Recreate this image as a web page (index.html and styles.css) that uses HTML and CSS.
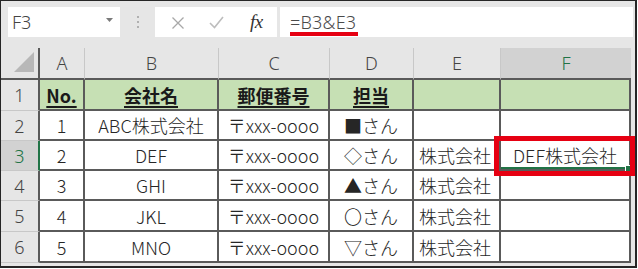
FILE: index.html
```html
<!DOCTYPE html>
<html lang="ja">
<head>
<meta charset="utf-8">
<title>Excel</title>
<link rel="stylesheet" href="styles.css">
</head>
<body>
<div class="frame">
  <div class="fbar">
    <div class="namebox">
      <span class="name">F3</span>
      <svg class="drop" width="7" height="4" viewBox="0 0 7 4"><path d="M0 0H7L3.5 4Z" fill="#7a7a7a"/></svg>
    </div>
    <div class="dots"><i></i><i></i><i></i></div>
    <div class="fxbox">
      <svg class="ico" width="14" height="14" viewBox="0 0 14 14"><path d="M1.5 1.5L12.5 12.5M12.5 1.5L1.5 12.5" stroke="#a8a8a8" stroke-width="1.3" fill="none"/></svg>
      <svg class="ico chk" width="15" height="13" viewBox="0 0 15 13"><path d="M1 7L5.5 11.5L14 1" stroke="#bdbdbd" stroke-width="1.6" fill="none"/></svg>
      <span class="fx">fx</span>
    </div>
    <div class="finput"><span class="formula">=B3&amp;E3</span></div>
  </div>
  <div class="sheet">
    <div class="ch corner"><span class="tri"></span></div>
    <div class="ch">A</div>
    <div class="ch">B</div>
    <div class="ch">C</div>
    <div class="ch">D</div>
    <div class="ch">E</div>
    <div class="ch sel">F</div>

    <div class="rh">1</div>
    <div class="c hd">No.</div>
    <div class="c hd">会社名</div>
    <div class="c hd">郵便番号</div>
    <div class="c hd">担当</div>
    <div class="c hd"></div>
    <div class="c hd"></div>

    <div class="rh">2</div>
    <div class="c">1</div>
    <div class="c">ABC株式会社</div>
    <div class="c">〒xxx-oooo</div>
    <div class="c">■さん</div>
    <div class="c l"></div>
    <div class="c"></div>

    <div class="rh sel">3</div>
    <div class="c">2</div>
    <div class="c">DEF</div>
    <div class="c">〒xxx-oooo</div>
    <div class="c">◇さん</div>
    <div class="c l">株式会社</div>
    <div class="c active">DEF株式会社<span class="handle"></span><span class="redbox"></span></div>

    <div class="rh">4</div>
    <div class="c">3</div>
    <div class="c">GHI</div>
    <div class="c">〒xxx-oooo</div>
    <div class="c">▲さん</div>
    <div class="c l">株式会社</div>
    <div class="c"></div>

    <div class="rh">5</div>
    <div class="c">4</div>
    <div class="c">JKL</div>
    <div class="c">〒xxx-oooo</div>
    <div class="c">〇さん</div>
    <div class="c l">株式会社</div>
    <div class="c"></div>

    <div class="rh">6</div>
    <div class="c">5</div>
    <div class="c">MNO</div>
    <div class="c">〒xxx-oooo</div>
    <div class="c">▽さん</div>
    <div class="c l">株式会社</div>
    <div class="c"></div>
  </div>
</div>
</body>
</html>
```
FILE: styles.css
```css
html, body {
  margin: 0;
  padding: 0;
  background: #ffffff;
}
.frame {
  position: relative;
  box-sizing: border-box;
  width: 637px;
  height: 268px;
  border: 1px solid #262626;
  border-right-width: 2px;
  border-bottom-width: 2px;
  background: #e6e6e6;
  overflow: visible;
}
.fbar {
  display: flex;
  align-items: flex-start;
  height: 47px;
  box-sizing: border-box;
  padding: 6px 0 0 7px;
}
.namebox {
  box-sizing: border-box;
  width: 112px;
  height: 30px;
  background: #fff;
  display: flex;
  align-items: center;
  justify-content: space-between;
  padding: 0 7px 0 4px;
}
.name {
  font-family: "Noto Sans", "Open Sans", sans-serif;
  font-size: 18px;
  font-weight: 300;
  color: #444;
}
.drop { margin-top: -5px; }
.dots {
  width: 35px;
  height: 30px;
  display: flex;
  flex-direction: column;
  align-items: center;
  justify-content: center;
  gap: 3px;
}
.dots i {
  display: block;
  width: 2px;
  height: 2px;
  background: #b0b0b0;
}
.fxbox {
  box-sizing: border-box;
  width: 122px;
  height: 30px;
  background: #fff;
  display: flex;
  align-items: center;
  padding-left: 16px;
}
.ico { margin-top: 1px; }
.chk { margin-left: 24px; }
.fx {
  margin-left: 26px;
  font-family: "Liberation Serif", serif;
  font-style: italic;
  font-size: 19px;
  color: #333;
  letter-spacing: -0.5px;
}
.finput {
  box-sizing: border-box;
  width: 353px;
  height: 30px;
  margin-left: 3px;
  background: #fff;
  padding-left: 10px;
  display: flex;
  align-items: center;
}
.formula {
  font-family: "Noto Sans", "Open Sans", sans-serif;
  font-size: 18px;
  font-weight: 300;
  color: #4a4a4a;
  position: relative;
  letter-spacing: 0.2px;
}
.formula::after {
  content: "";
  position: absolute;
  left: 0;
  right: -2px;
  bottom: -2px;
  height: 4px;
  background: #e60012;
}
.sheet {
  display: grid;
  grid-template-columns: 39px 45px 134px 111px 84px 87px 130px;
  grid-template-rows: 32px 31px 30px 30px 30px 31px 31px;
}
.ch {
  box-sizing: border-box;
  display: flex;
  align-items: center;
  justify-content: center;
  font-family: "Noto Sans", "Open Sans", sans-serif;
  font-size: 18px;
  font-weight: 300;
  color: #444;
  border-right: 1px solid #c8c8c8;
  border-bottom: 2px solid #5a5a5a;
}
.ch.corner {
  position: relative;
  border-right: 2px solid #5a5a5a;
}
.tri {
  position: absolute;
  right: 4px;
  bottom: 6px;
  width: 0;
  height: 0;
  border-left: 20px solid transparent;
  border-bottom: 20px solid #b8b8b8;
}
.ch.sel {
  background: #d2d2d2;
  color: #217346;
  border-right: none;
}
.rh {
  box-sizing: border-box;
  display: flex;
  align-items: center;
  justify-content: center;
  font-family: "Noto Sans", "Open Sans", sans-serif;
  font-size: 18px;
  font-weight: 300;
  color: #444;
  border-right: 2px solid #5a5a5a;
  border-bottom: 1px solid #c8c8c8;
}
.rh.sel {
  background: #d2d2d2;
  color: #217346;
  border-right-color: #217346;
}
.c {
  box-sizing: border-box;
  display: flex;
  align-items: center;
  justify-content: center;
  background: #fff;
  font-family: "Noto Sans CJK JP", "Noto Sans", sans-serif;
  font-size: 18px;
  font-weight: 300;
  color: #262626;
  border-right: 2px solid #5a5a5a;
  border-bottom: 2px solid #5a5a5a;
  white-space: nowrap;
  overflow: visible;
}
.c.l {
  justify-content: flex-start;
  padding-left: 5px;
}
.c.hd {
  background: #c6e0b4;
  font-weight: 700;
  text-decoration: underline;
  text-underline-offset: 3px;
  text-decoration-thickness: 2px;
  color: #1a1a1a;
}
.c.active {
  position: relative;
  box-shadow: inset 0 -2px 0 #217346;
}
.handle {
  position: absolute;
  right: -3px;
  bottom: -3px;
  width: 5px;
  height: 5px;
  background: #217346;
  border: 1px solid #fff;
  z-index: 2;
}
.redbox {
  position: absolute;
  left: -7px;
  right: -6px;
  top: -5px;
  bottom: -7px;
  border: 5px solid #e60012;
  z-index: 3;
}
```
